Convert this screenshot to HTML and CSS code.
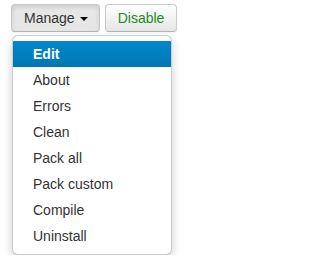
FILE: index.html
```html
<!DOCTYPE html>
<html>
<head>
<meta charset="utf-8">
<link rel="stylesheet" href="styles.css">
</head>
<body>
<div class="page">
  <div class="toolbar">
    <button class="btn btn-open">Manage <span class="caret"></span></button>
    <button class="btn btn-green">Disable</button>
  </div>
  <ul class="menu">
    <li class="item active">Edit</li>
    <li class="item">About</li>
    <li class="item">Errors</li>
    <li class="item">Clean</li>
    <li class="item">Pack all</li>
    <li class="item">Pack custom</li>
    <li class="item">Compile</li>
    <li class="item">Uninstall</li>
  </ul>
</div>
</body>
</html>
```
FILE: styles.css
```css
html, body {
  margin: 0;
  padding: 0;
  background: #fff;
}
body {
  font-family: "Liberation Sans", Arial, sans-serif;
  font-size: 14px;
  color: #333;
}
.page {
  padding: 4px 0 0 11px;
  display: flex;
  flex-direction: column;
  align-items: flex-start;
}
.toolbar {
  display: flex;
  gap: 5px;
}
.btn {
  font-family: inherit;
  font-size: 14px;
  line-height: 18px;
  height: 28px;
  padding: 4px 12px;
  margin: 0;
  border: 1px solid #c8c8c8;
  border-bottom-color: #b3b3b3;
  border-radius: 4px;
  background: linear-gradient(#ffffff, #e6e6e6);
  color: #333;
  box-shadow: inset 0 1px 0 rgba(255,255,255,.2), 0 1px 2px rgba(0,0,0,.05);
  display: flex;
  align-items: center;
}
.btn-open {
  width: 89px;
  background: #e6e6e6;
  box-shadow: inset 0 2px 4px rgba(0,0,0,.12), 0 1px 2px rgba(0,0,0,.05);
}
.btn-green {
  width: 72px;
  justify-content: center;
  color: #1f8a1f;
}
.caret {
  display: inline-block;
  width: 0;
  height: 0;
  margin-left: 5px;
  margin-top: 1px;
  border-top: 4px solid #000;
  border-left: 4px solid transparent;
  border-right: 4px solid transparent;
}
.menu {
  margin: 3px 0 0 1px;
  width: 158px;
  padding: 5px 0;
  list-style: none;
  background: #fff;
  border: 1px solid rgba(0,0,0,.2);
  border-radius: 6px;
  box-shadow: 0 5px 10px rgba(0,0,0,.2);
}
.item {
  padding: 3px 20px;
  line-height: 20px;
  color: #333;
  white-space: nowrap;
}
.item.active {
  color: #fff;
  font-weight: bold;
  background: linear-gradient(#0088cc, #0077b3);
}
```
